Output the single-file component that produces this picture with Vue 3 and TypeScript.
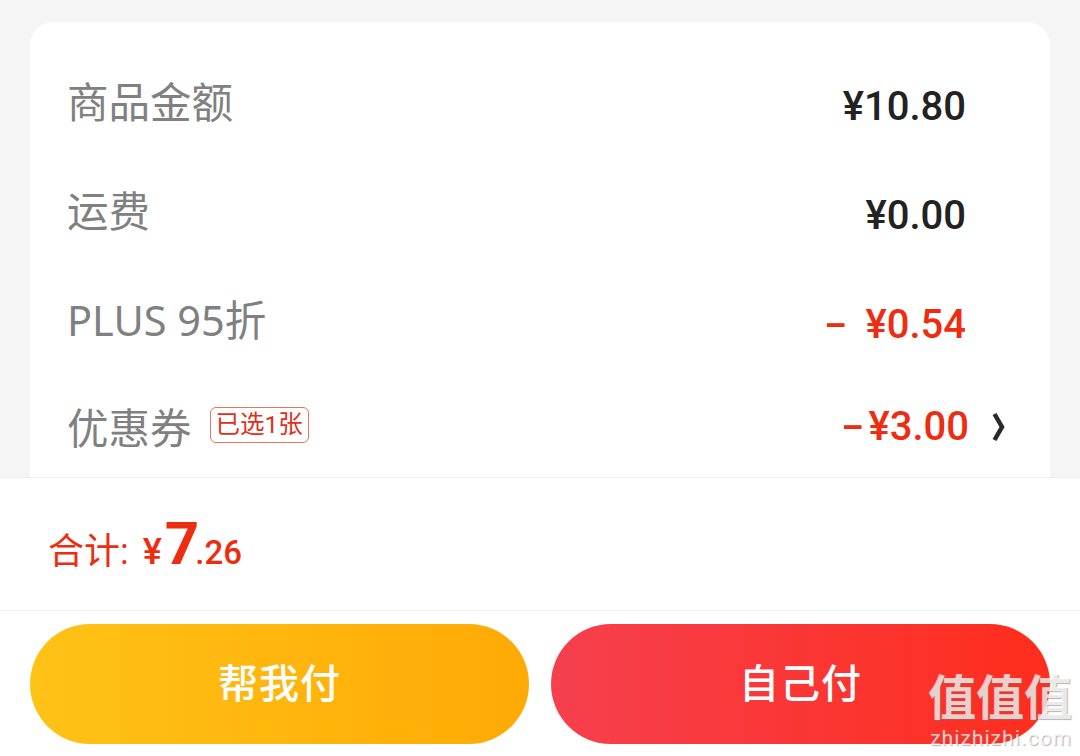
<script setup lang="ts">
interface FeeRow {
  label: string
  amount: string
  sign?: boolean
}

const rows: FeeRow[] = [
  { label: '商品金额', amount: '¥10.80' },
  { label: '运费', amount: '¥0.00' },
  { label: 'PLUS 95折', amount: '¥0.54', sign: true }
]
</script>

<template>
  <div class="page">
    <section class="card">
      <div v-for="row in rows" :key="row.label" class="row">
        <span class="label">{{ row.label }}</span>
        <span class="amount" :class="{ red: row.sign }">
          <span v-if="row.sign" class="sign wide">-</span>{{ row.amount }}
        </span>
      </div>
      <div class="row coupon">
        <span class="label">优惠券</span>
        <span class="tag">已选1张</span>
        <span class="amount red"><span class="sign">-</span>¥3.00</span>
        <svg class="chevron" width="14" height="30" viewBox="0 0 14 30">
          <path d="M2.5 2 L10 15 L2.5 28" fill="none" stroke="#2a2a2a" stroke-width="4.5" />
        </svg>
      </div>
    </section>
    <section class="total">
      <span class="total-label">合计:</span>
      <span class="yen">¥</span>
      <span class="big">7</span>
      <span class="cents">.26</span>
    </section>
    <section class="actions">
      <button class="btn yellow">帮我付</button>
      <button class="btn redbtn">自己付</button>
    </section>
    <div class="mark">
      <span class="mark-cn">值值值</span>
      <span class="mark-en">zhizhizhi.com</span>
    </div>
  </div>
</template>

<style>
body {
  margin: 0;
  background: #f5f5f5;
}
</style>

<style scoped>
.page {
  position: relative;
  width: 1080px;
  height: 756px;
  overflow: hidden;
  padding-top: 22px;
  box-sizing: border-box;
  background: #f5f5f5;
  font-family: "Roboto", "Noto Sans CJK SC", sans-serif;
}
.card {
  height: 480px;
  margin: 0 30px;
  padding: 30px 84px 0 37px;
  box-sizing: border-box;
  background: #fff;
  border-radius: 24px 24px 0 0;
}
.row {
  display: flex;
  align-items: center;
  justify-content: space-between;
  height: 109px;
}
.label {
  margin-bottom: 14px;
  font-family: "Noto Sans", "Noto Sans CJK SC", sans-serif;
  font-size: 41.5px;
  color: #808080;
}
.amount {
  font-size: 40px;
  font-weight: 500;
  color: #222;
}
.red {
  color: #ee2c10;
}
.sign {
  display: inline-block;
  margin-right: 9px;
  transform: scaleX(1.7);
}
.sign.wide {
  margin-right: 23px;
}
.coupon {
  justify-content: flex-start;
  margin-top: -7px;
}
.coupon .label {
  margin-bottom: 2px;
}
.tag {
  margin: 0 0 4px 18px;
  padding: 0 5px;
  border: 1px solid #e8735f;
  border-radius: 6px;
  font-size: 24.5px;
  line-height: 34px;
  color: #e0301a;
}
.coupon .amount {
  margin-left: auto;
}
.chevron {
  flex: none;
  margin: 0 -40px 0 23px;
}
.total {
  display: flex;
  align-items: baseline;
  height: 134px;
  margin-top: -25px;
  padding: 0 48px;
  box-sizing: border-box;
  line-height: 131px;
  background: #fff;
  border-top: 1px solid #eee;
  border-bottom: 1px solid #eee;
  color: #ee2c10;
}
.total-label {
  font-size: 36px;
}
.yen {
  margin-left: 14px;
  font-size: 36px;
  font-weight: 500;
}
.big {
  margin-left: 3px;
  font-size: 60px;
  font-weight: 700;
  letter-spacing: -4px;
}
.cents {
  font-size: 33px;
  font-weight: 500;
}
.actions {
  display: flex;
  gap: 22px;
  height: 146px;
  padding: 13px 30px 0;
  box-sizing: border-box;
  background: #fff;
}
.btn {
  flex: 1;
  height: 120px;
  padding: 0 0 6px;
  border: 0;
  border-radius: 60px;
  font-family: inherit;
  font-size: 40px;
  font-weight: 500;
  letter-spacing: 1px;
  color: #fff;
}
.yellow {
  background: linear-gradient(90deg, #ffc216, #ffaa05);
}
.redbtn {
  background: linear-gradient(90deg, #f6404e, #ff2d1c);
}
.mark {
  position: absolute;
  right: 8px;
  bottom: 7px;
  display: flex;
  flex-direction: column;
  align-items: flex-end;
  color: rgba(255, 255, 255, 0.72);
  text-shadow: 1px 1px 1px rgba(120, 120, 120, 0.55);
}
.mark-cn {
  font-size: 48px;
  font-weight: 700;
  line-height: 56px;
}
.mark-en {
  font-size: 21px;
  line-height: 22px;
  letter-spacing: 1.05px;
}
</style>
